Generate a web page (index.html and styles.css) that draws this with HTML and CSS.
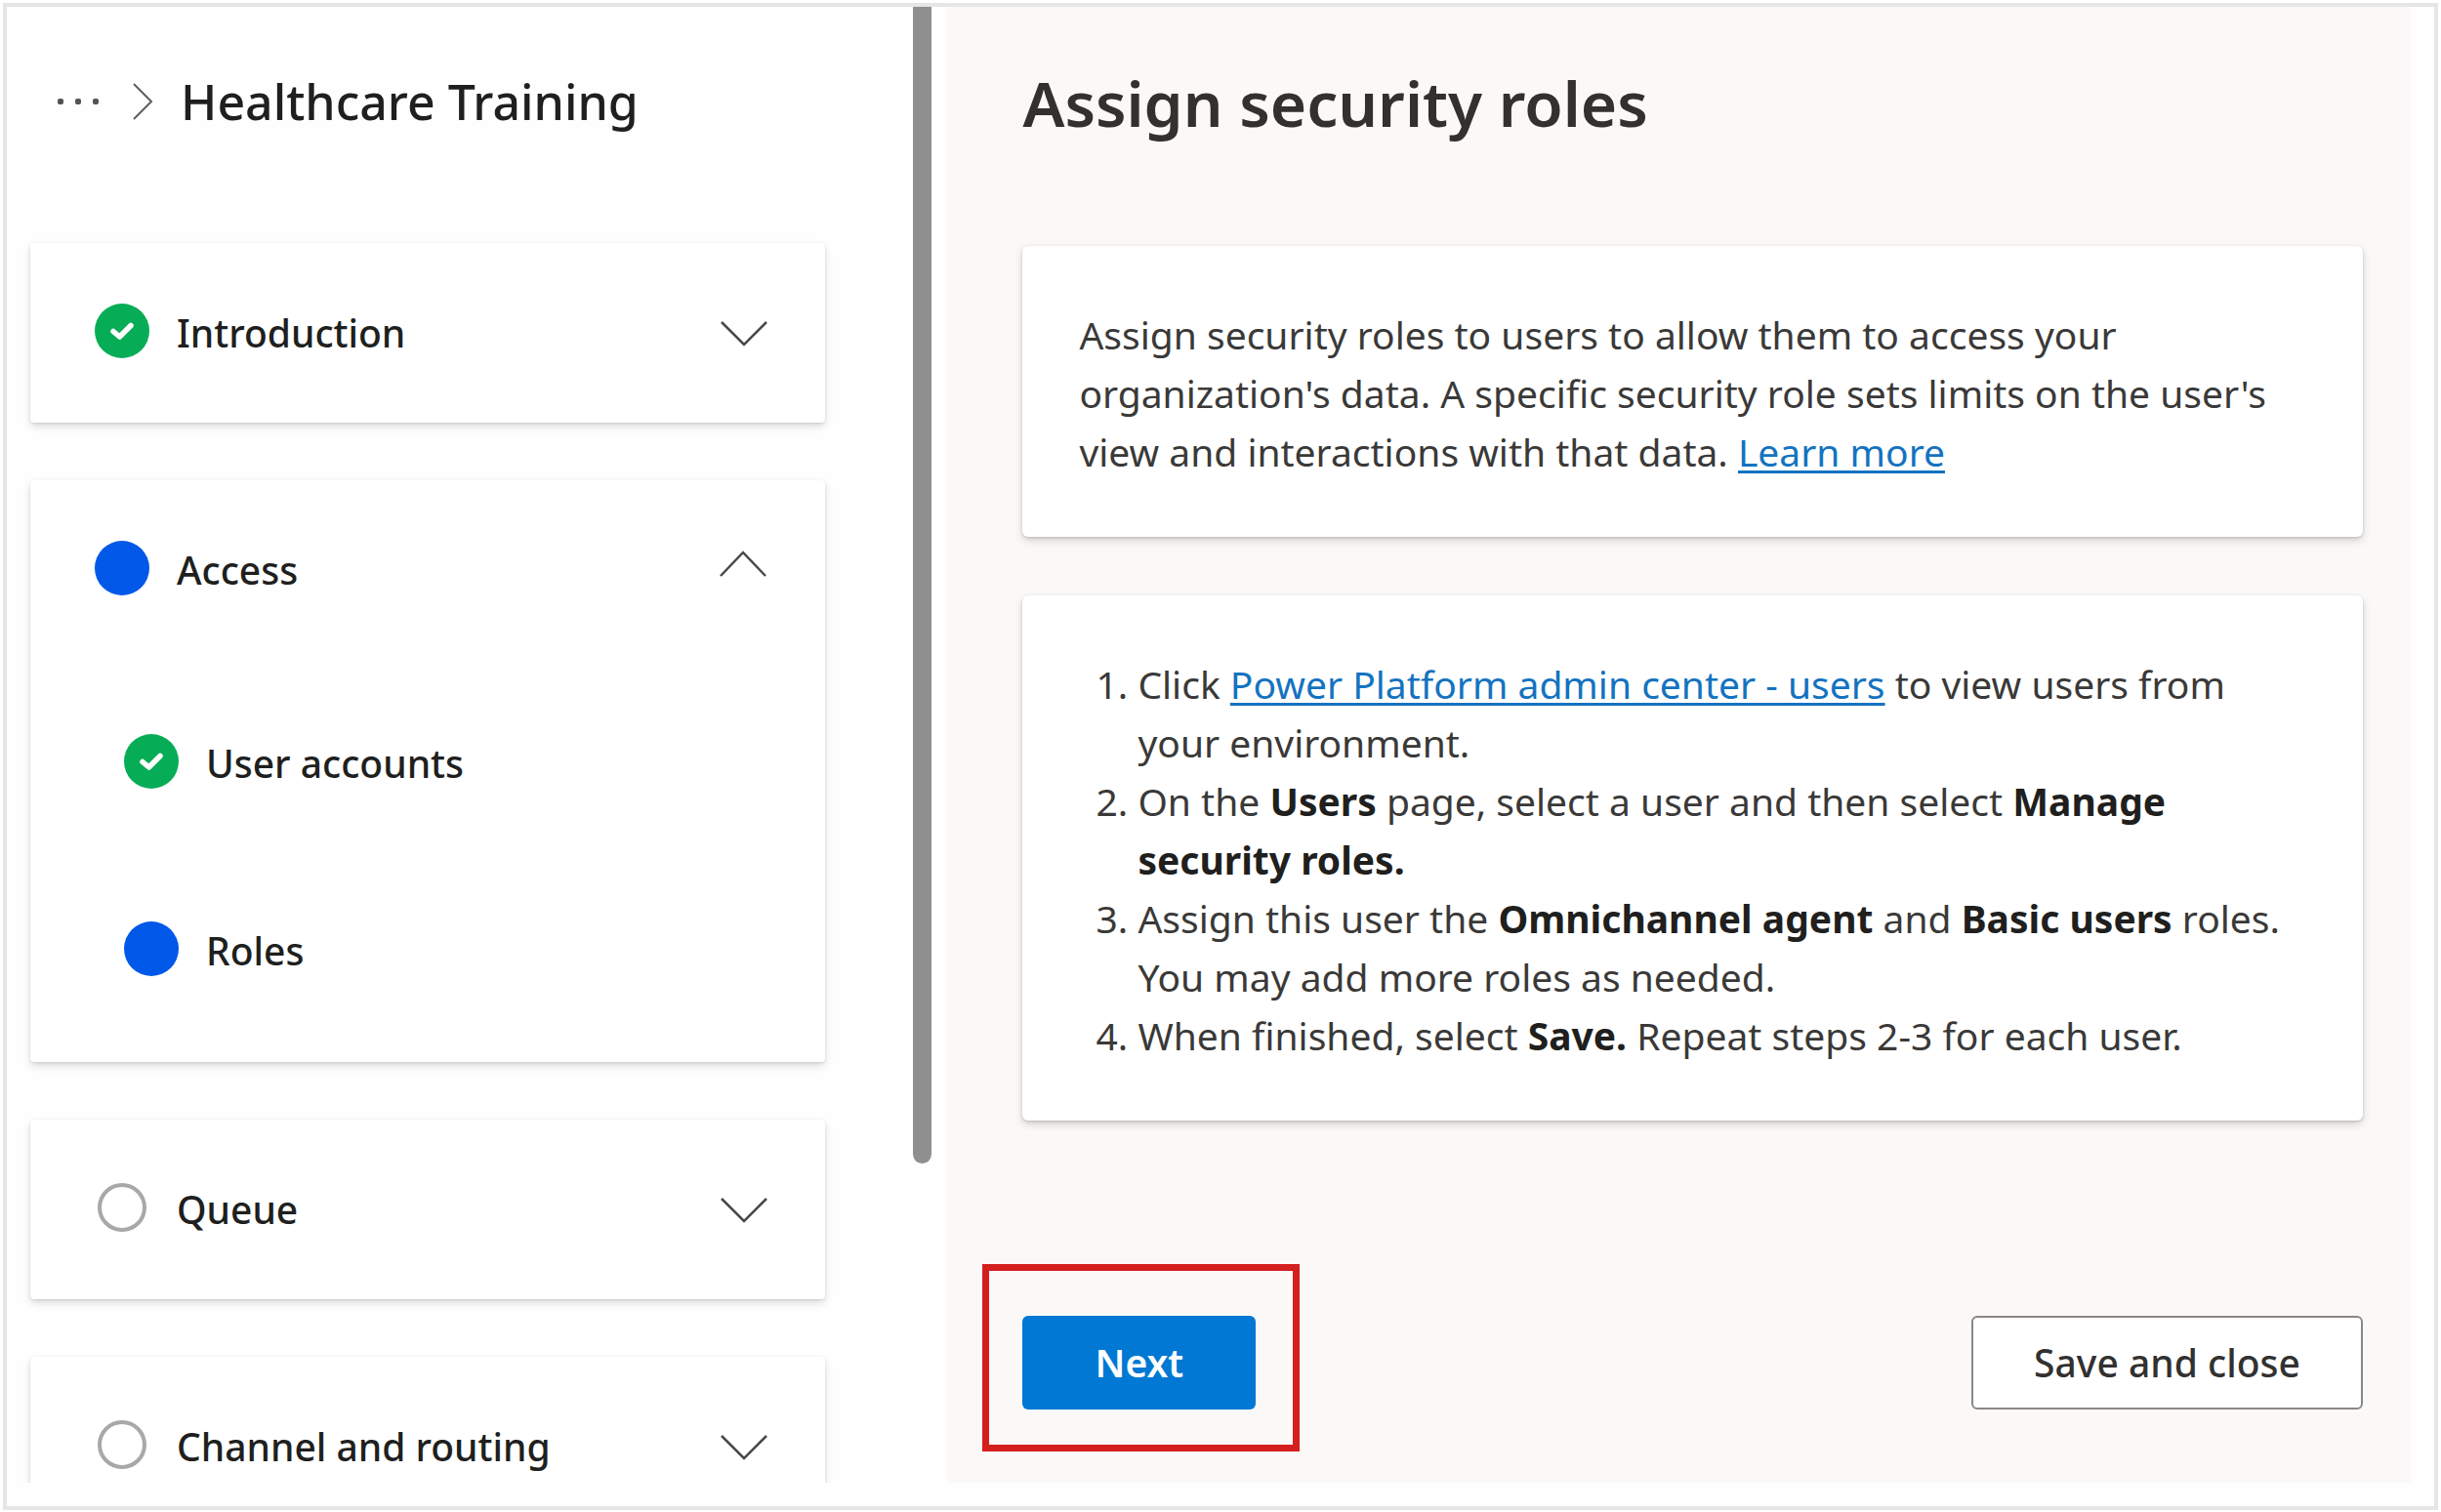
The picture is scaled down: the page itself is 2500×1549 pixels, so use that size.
FILE: index.html
```html
<!DOCTYPE html>
<html lang="en">
<head>
<meta charset="utf-8">
<meta name="viewport" content="width=device-width, initial-scale=1">
<title>Healthcare Training</title>
<link rel="stylesheet" href="styles.css">
</head>
<body>
<div class="frame">
  <aside class="sidebar">
    <div class="sidebar-content">
      <header class="breadcrumb">
        <button class="more" type="button" aria-label="More">
          <svg width="42" height="6" viewBox="0 0 42 6"><g fill="#55534f"><rect width="6" height="6" rx="2"/><rect x="18" width="6" height="6" rx="2"/><rect x="36" width="6" height="6" rx="2"/></g></svg>
        </button>
        <svg class="crumb-arrow" width="22" height="38" viewBox="0 0 22 38" aria-hidden="true"><path d="M2 1 20 19 2 37" fill="none" stroke="#605e5c" stroke-width="2"/></svg>
        <h2 class="crumb-title">Healthcare Training</h2>
      </header>
      <nav class="steps" aria-label="Training steps">
        <section class="step">
          <button class="step-head" type="button" aria-expanded="false">
            <svg class="status" viewBox="0 0 56 56"><circle cx="28" cy="28" r="28" fill="#07ad56"/><path d="M19 28.500 25.500 34 37 22.500" fill="none" stroke="#fff" stroke-width="5.500" stroke-linecap="round" stroke-linejoin="round"/></svg>
            <span class="step-label">Introduction</span>
            <svg class="chevron" viewBox="0 0 50 50"><path d="M2 16 25 39 48 16" fill="none" stroke="#4a4846" stroke-width="2.500"/></svg>
          </button>
        </section>
        <section class="step">
          <button class="step-head" type="button" aria-expanded="true">
            <svg class="status" viewBox="0 0 56 56"><circle cx="28" cy="28" r="28" fill="#0058e8"/></svg>
            <span class="step-label">Access</span>
            <svg class="chevron" viewBox="0 0 50 50"><path d="M1 33 24 9 47 33" fill="none" stroke="#4a4846" stroke-width="2.500"/></svg>
          </button>
          <ul class="substeps">
            <li class="substep">
              <svg class="status" viewBox="0 0 56 56"><circle cx="28" cy="28" r="28" fill="#07ad56"/><path d="M19 28.500 25.500 34 37 22.500" fill="none" stroke="#fff" stroke-width="5.500" stroke-linecap="round" stroke-linejoin="round"/></svg>
              <span class="step-label">User accounts</span>
            </li>
            <li class="substep">
              <svg class="status" viewBox="0 0 56 56"><circle cx="28" cy="28" r="28" fill="#0058e8"/></svg>
              <span class="step-label">Roles</span>
            </li>
          </ul>
        </section>
        <section class="step">
          <button class="step-head" type="button" aria-expanded="false">
            <svg class="status" viewBox="0 0 56 56"><circle cx="28" cy="28" r="23" fill="#fff" stroke="#a8a8a8" stroke-width="4"/></svg>
            <span class="step-label">Queue</span>
            <svg class="chevron" viewBox="0 0 50 50"><path d="M2 16 25 39 48 16" fill="none" stroke="#4a4846" stroke-width="2.500"/></svg>
          </button>
        </section>
        <section class="step">
          <button class="step-head" type="button" aria-expanded="false">
            <svg class="status" viewBox="0 0 56 56"><circle cx="28" cy="28" r="23" fill="#fff" stroke="#a8a8a8" stroke-width="4"/></svg>
            <span class="step-label">Channel and routing</span>
            <svg class="chevron" viewBox="0 0 50 50"><path d="M2 16 25 39 48 16" fill="none" stroke="#4a4846" stroke-width="2.500"/></svg>
          </button>
        </section>
      </nav>
    </div>
    <div class="scroll-thumb" aria-hidden="true"></div>
  </aside>
  <main class="main">
    <h1 class="title">Assign security roles</h1>
    <div class="cards">
      <section class="card">
        <p>Assign security roles to users to allow them to access your organization's data. A specific security role sets limits on the user's view and interactions with that data. <a href="#">Learn more</a></p>
      </section>
      <section class="card">
        <ol class="instructions">
          <li>Click <a href="#">Power Platform admin center - users</a> to view users from your environment.</li>
          <li>On the <strong>Users</strong> page, select a user and then select <strong>Manage security roles.</strong></li>
          <li>Assign this user the <strong>Omnichannel agent</strong> and <strong>Basic users</strong> roles. You may add more roles as needed.</li>
          <li>When finished, select <strong>Save.</strong> Repeat steps 2-3 for each user.</li>
        </ol>
      </section>
    </div>
    <div class="actions">
      <div class="highlighted"><button class="btn btn-primary" type="button">Next</button></div>
      <button class="btn btn-default" type="button">Save and close</button>
    </div>
  </main>
</div>
</body>
</html>
```
FILE: styles.css
```css
* { box-sizing: border-box; }

body {
  margin: 0;
  padding: 3px;
  background: #fff;
  color: #3a3938;
  font: 39px/60px "Noto Sans", "Open Sans", sans-serif;
}

h1, h2, p, ol, ul { margin: 0; padding: 0; }

button {
  padding: 0;
  border: 0;
  background: none;
  color: inherit;
  font: inherit;
  cursor: pointer;
}

a {
  color: #1473c0;
  text-decoration-thickness: 3px;
  text-underline-offset: 4px;
}

svg { display: block; flex: none; }

.frame {
  display: grid;
  grid-template-columns: minmax(0, 9fr) minmax(0, 14fr);
  height: calc(100vh - 5px);
  padding: 0 24px 24px 0;
  border: 4px solid #e6e6e6;
  background: #fefefe;
}

/* Sidebar */
.sidebar {
  display: flex;
  align-items: flex-start;
  gap: 90px;
  min-height: 0;
  padding: 0 16px 0 24px;
  overflow: hidden;
}

.sidebar-content { flex: 1; min-width: 0; }

.scroll-thumb {
  width: 19px;
  height: 1185px;
  max-height: 80%;
  border-radius: 0 0 10px 10px;
  background: #8f8f8f;
}

.breadcrumb {
  display: flex;
  align-items: center;
  padding: 61px 0 109px 28px;
}

.crumb-arrow { margin: 0 28px 0 34px; }

.crumb-title {
  color: #201f1e;
  font-size: 50px;
  font-weight: 500;
  line-height: 72px;
}

.steps { display: grid; gap: 59px; }

.step {
  padding-bottom: 4px;
  border-radius: 4px;
  background: #fff;
  box-shadow: 0 4px 8px rgba(0, 0, 0, .13), 0 1px 3px rgba(0, 0, 0, .11);
}

.step-head, .substep {
  display: flex;
  align-items: center;
  gap: 28px;
  width: 100%;
  text-align: left;
}

.step-head { height: 180px; padding: 0 58px 0 66px; }
.substep { height: 192px; padding-left: 96px; }
.substeps { padding: 12px 0 16px; list-style: none; }

.status { width: 56px; height: 56px; }
.step-label { flex: 1; padding-top: 4px; color: #201f1e; font-weight: 500; }
.chevron { width: 50px; height: 50px; }

/* Main panel */
.main {
  padding: 51px 49px 75px 77px;
  overflow: hidden;
  background: #faf9f8;
}

.title {
  margin-bottom: 98px;
  color: #323130;
  font-size: 64px;
  font-weight: 600;
  line-height: 96px;
}

.cards { display: grid; gap: 60px; }

.card {
  padding: 61px 58px 57px;
  border-radius: 6px;
  background: #fff;
  box-shadow: 0 4px 8px rgba(0, 0, 0, .15), 0 1px 3px rgba(0, 0, 0, .16);
}

.card strong { color: #201f1e; font-weight: 700; }
.instructions { padding-left: 60px; }

.actions {
  display: flex;
  justify-content: space-between;
  margin-top: 200px;
}

.btn { height: 96px; border-radius: 6px; font-weight: 600; }

.btn-primary {
  width: 239px;
  background: #0078d4;
  color: #fff;
}

.btn-default {
  width: 401px;
  border: 2px solid #8a8886;
  background: #fff;
  color: #323130;
  font-weight: 500;
}

/* Callout drawn round the primary button */
.highlighted { position: relative; }

.highlighted::after {
  position: absolute;
  inset: -53px -45px -43px -41px;
  border: 7px solid #d41f1f;
  content: "";
  pointer-events: none;
}
```
